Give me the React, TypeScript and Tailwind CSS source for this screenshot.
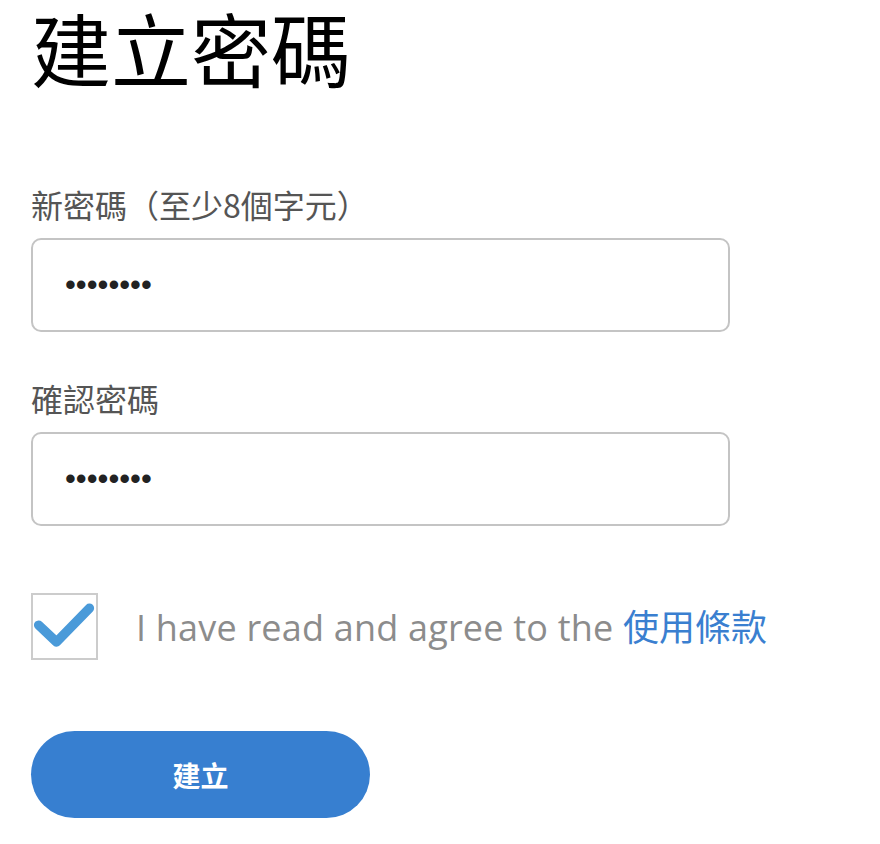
const cjk = { fontFamily: '"Noto Sans CJK TC", "Noto Sans", sans-serif' };

const Field = ({ label }: { label: string }) => (
  <div className="flex flex-col">
    <label className="text-[32px] leading-[40px] text-[#555555]">{label}</label>
    <input
      type="password"
      defaultValue="12345678"
      readOnly
      className="mt-[14px] h-[94px] w-[699px] rounded-[10px] border-2 border-[#c4c4c4] bg-white px-[32px] text-[31px] text-[#222222] outline-none"
      style={{ fontFamily: '"Liberation Sans", sans-serif' }}
    />
  </div>
);

const App = () => {
  return (
    <div className="min-h-screen bg-white px-[31px] pt-0" style={cjk}>
      <h1 className="-mt-[12px] text-[80px] font-normal leading-[116px] text-black">建立密碼</h1>

      <div className="mt-[80px] flex flex-col gap-[46px]">
        <Field label="新密碼（至少8個字元）" />
        <Field label="確認密碼" />
      </div>

      <div className="mt-[67px] flex items-center gap-[38px]">
        <div className="flex h-[67px] w-[67px] shrink-0 items-center justify-center border-2 border-[#cccccc]">
          <svg width="67" height="67" viewBox="0 0 67 67">
            <path
              d="M6 32 L25 50 L60 14"
              fill="none"
              stroke="#4a9ad9"
              strokeWidth="10"
              strokeLinecap="round"
              strokeLinejoin="round"
            />
          </svg>
        </div>
        <p className="text-[36px] text-[#8c8c8c]">
          <span className="tracking-[0.2px]" style={{ fontFamily: '"Open Sans", sans-serif' }}>
            I have read and agree to the{" "}
          </span>
          <a className="text-[#3a7fd0]" href="#">
            使用條款
          </a>
        </p>
      </div>

      <button className="mt-[71px] flex h-[87px] w-[339px] items-center justify-center rounded-full bg-[#377fd0] text-[28px] font-bold text-white">
        建立
      </button>
    </div>
  );
};

export default App;
